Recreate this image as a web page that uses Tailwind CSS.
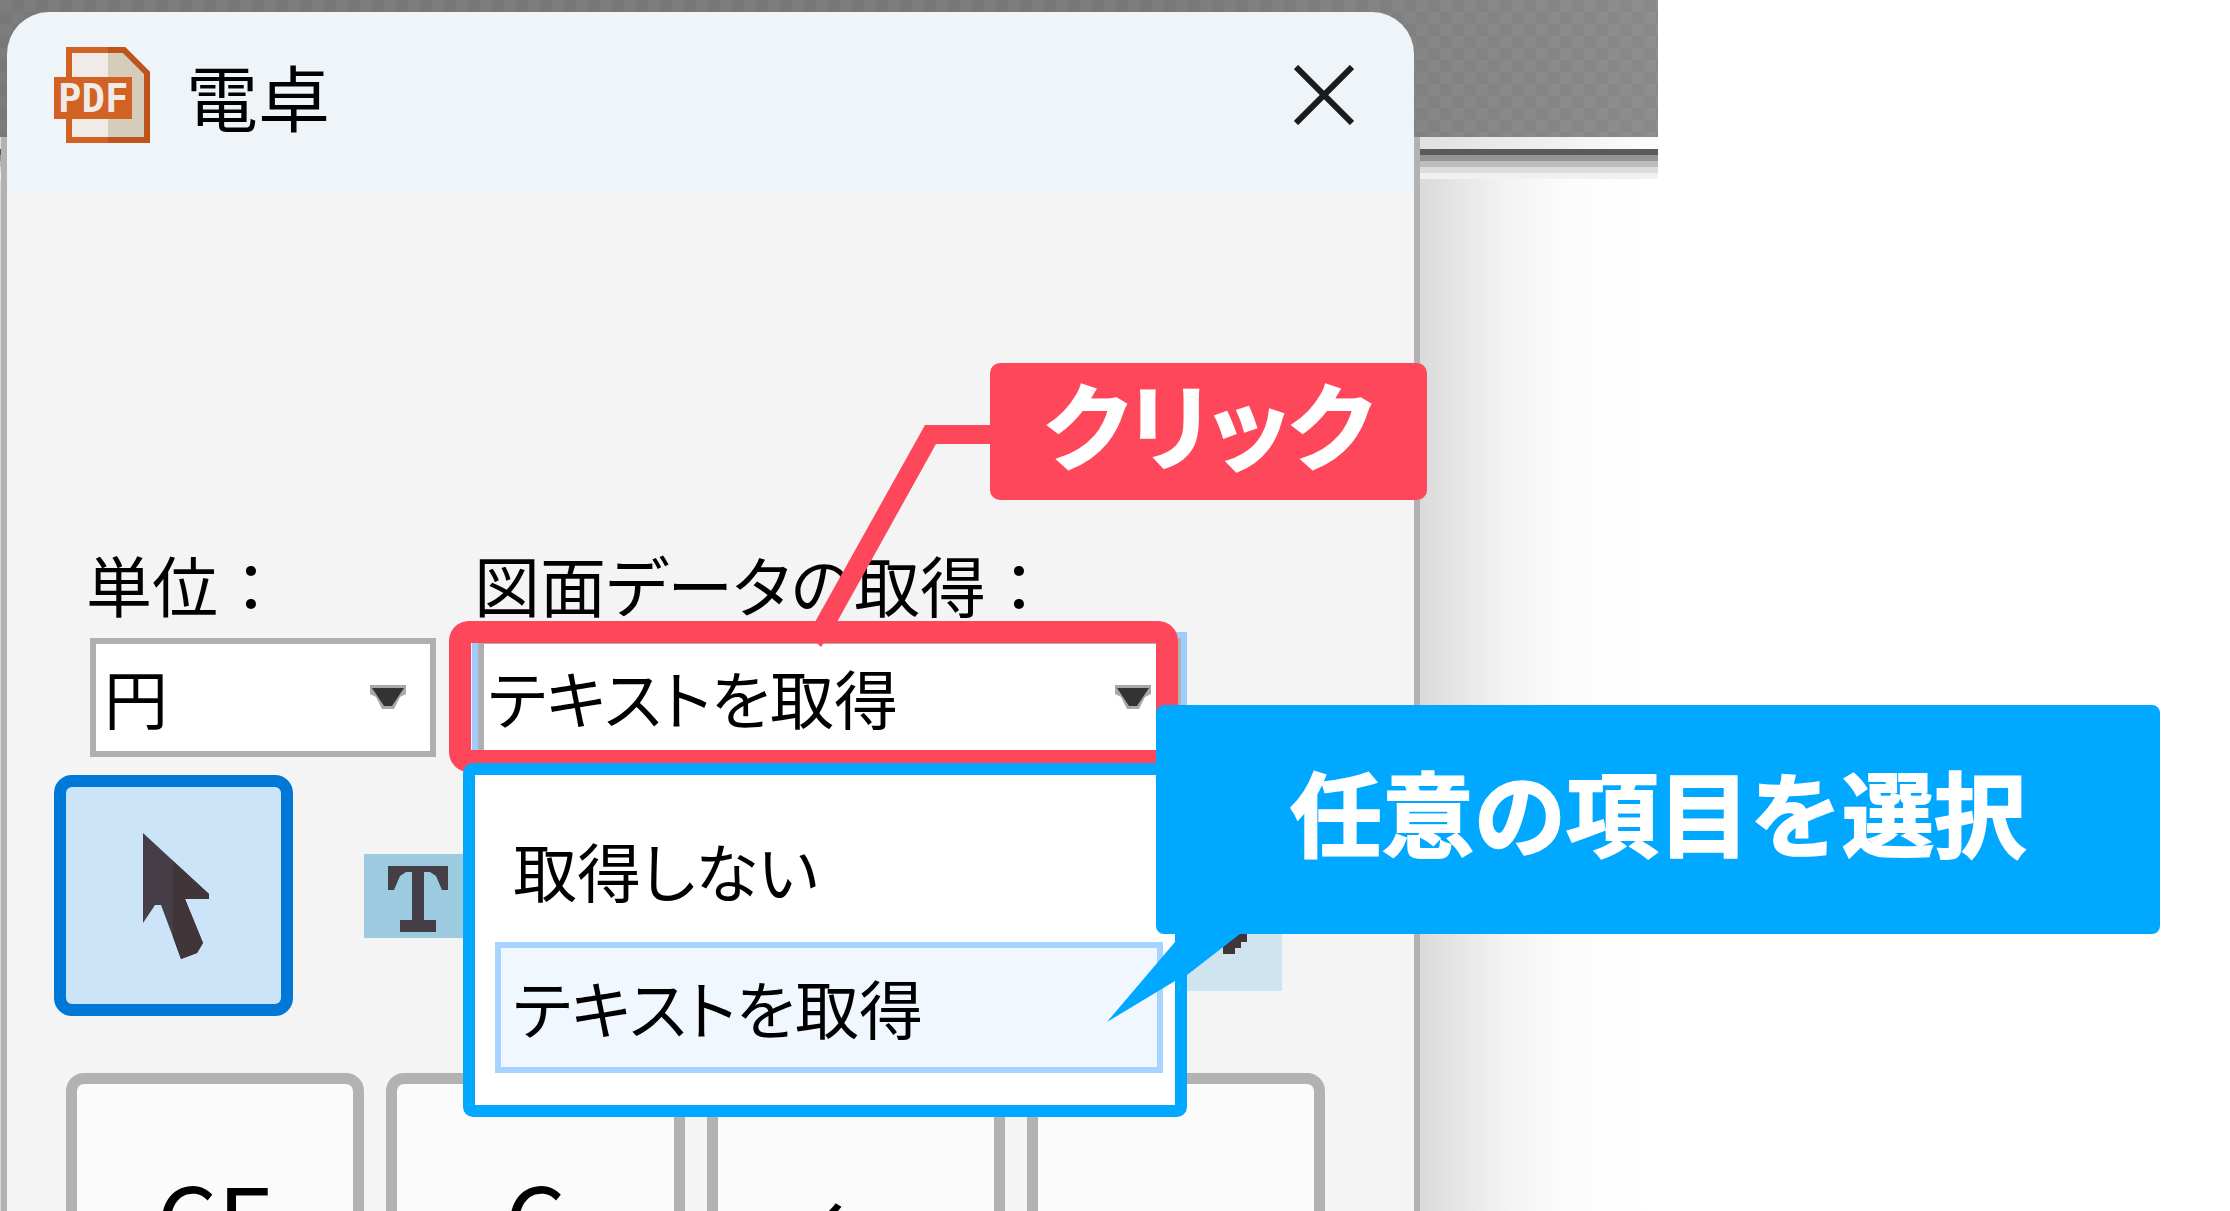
<!DOCTYPE html>
<html lang="ja">
<head>
    <meta charset="UTF-8">
    <meta name="viewport" content="width=device-width, initial-scale=1.0">
    <title>電卓</title>
    <script src="https://cdn.jsdelivr.net/npm/@tailwindcss/browser@4"></script>
</head>
<body class="bg-white font-['Noto_Sans_CJK_JP',sans-serif] text-black">
    <main class="relative h-screen overflow-hidden [font-feature-settings:'palt']">

        <!-- Application behind the dialog -->
        <div class="absolute inset-y-0 left-0 w-full max-w-[1658px] flex flex-col">
            <div class="h-[137px] bg-[linear-gradient(to_right,rgba(0,0,0,0.08)_70%,rgba(255,255,255,0.06)),repeating-conic-gradient(#828282_0_25%,#878787_0_50%)] bg-[length:100%_100%,24px_24px]"></div>
            <div class="h-3 bg-[linear-gradient(to_right,#e0e0e0_1420px,#fdfdfd)]"></div>
            <div class="h-[6px] bg-[#5a5a5a]"></div>
            <div class="h-[6px] bg-[#949494]"></div>
            <div class="h-[6px] bg-[#bdbdbd]"></div>
            <div class="h-[6px] bg-[#dcdcdc]"></div>
            <div class="h-[6px] bg-[#f1f1f1]"></div>
            <div class="grow bg-[linear-gradient(to_right,#dadada_1420px,#e6e6e6_1460px,#f4f4f4_1510px,#fcfcfc_1570px,#ffffff_1650px)]"></div>
        </div>

        <!-- Calculator dialog -->
        <section class="relative mt-3 ml-px w-full max-w-[1419px] px-[6px] bg-[linear-gradient(transparent_125px,#b2b2b2_0)]" aria-label="電卓">
            <header class="h-[179px] rounded-t-[42px] bg-[#eef4f8] flex items-center justify-between pl-[47px] pr-[60px] pb-[13px]">
                <div class="flex items-center gap-9">
                    <svg class="size-24" viewBox="0 0 96 96" aria-hidden="true">
                        <path d="M15 3H70L93 26V93H15Z" fill="#f0ebe6"/>
                        <path d="M54 3H70L93 26V93H54Z" fill="#d5ccb9"/>
                        <path d="M54 3H15V93H54" fill="none" stroke="#d26224" stroke-width="6"/>
                        <path d="M54 3H70L93 26V93H54" fill="none" stroke="#bd541b" stroke-width="6"/>
                        <rect y="30" width="78" height="42" fill="#d26224"/>
                        <text x="4" y="65" font-family="DejaVu Sans Mono" font-weight="bold" font-size="39" fill="#f0ebe6">PDF</text>
                    </svg>
                    <h1 class="text-[72px] leading-none">電卓</h1>
                </div>
                <button type="button" aria-label="閉じる">
                    <svg class="size-[60px]" viewBox="0 0 60 60"><path d="M2 2L58 58M58 2L2 58" stroke="#1a1b1c" stroke-width="6"/></svg>
                </button>
            </header>

            <div class="bg-[#f4f4f4]">
                <form class="flex gap-[42px] pl-[83px] pt-[356px]">
                    <div class="w-[346px]">
                        <label for="unit" class="block -ml-1 mb-[19px] text-[66px] leading-[72px] whitespace-nowrap">単位<span class="[font-feature-settings:normal]">：</span></label>
                        <div class="relative">
                            <select id="unit" class="appearance-none block w-full h-[119px] border-[6px] border-[#afafaf] bg-white pl-2 pb-1 text-[64px] leading-[72px]">
                                <option>円</option>
                            </select>
                            <svg class="absolute right-[30px] top-[47px] w-9 h-6 pointer-events-none" viewBox="0 0 36 24"><path d="M0 0H36V9L30 12L24 24H12L6 12L0 9Z" fill="#a8a8a8"/><path d="M2 3H34L22 21H14Z" fill="#333333"/></svg>
                        </div>
                    </div>
                    <div class="w-[703px]">
                        <label for="source" class="block -ml-1 mb-[19px] text-[66px] leading-[72px] whitespace-nowrap">図面データの取得<span class="[font-feature-settings:normal]">：</span></label>
                        <div class="relative">
                            <select id="source" class="appearance-none block w-full h-[119px] border-[6px] border-[#afafaf] ring-[6px] ring-[#9fcbff] bg-white pl-1 pb-1 text-[64px] leading-[72px]">
                                <option>テキストを取得</option>
                            </select>
                            <svg class="absolute right-[30px] top-[47px] w-9 h-6 pointer-events-none" viewBox="0 0 36 24"><path d="M0 0H36V9L30 12L24 24H12L6 12L0 9Z" fill="#a8a8a8"/><path d="M2 3H34L22 21H14Z" fill="#333333"/></svg>
                        </div>
                    </div>
                </form>

                <div class="flex items-center pt-[18px] pl-[47px] pr-[132px]">
                    <button type="button" aria-label="選択" class="w-[239px] h-[241px] rounded-[18px] border-[12px] border-[#0078d7] bg-[#cce4f7]">
                        <svg class="w-[72px] h-[126px] ml-[77px]" viewBox="0 0 72 126">
                            <path d="M0 0L66 61V66H42L60 110L54 120L38 126L30 104L18 72H12L0 90Z" fill="#463e46"/>
                            <path d="M30 28L66 61V66H42L60 110L54 120L38 126L30 104Z" fill="#403538"/>
                        </svg>
                    </button>
                    <button type="button" aria-label="テキスト" class="ml-[71px]">
                        <svg class="w-[108px] h-[84px]" viewBox="0 0 108 84">
                            <rect width="108" height="84" fill="#9ccadf"/>
                            <path d="M24 12H84V36H78L72 22L66 18H60V66H72V78H36V66H48V18H42L36 22L30 36H24Z" fill="#463e46"/>
                        </svg>
                    </button>
                    <button type="button" aria-label="範囲" class="ml-auto">
                        <svg class="w-[140px] h-[190px]" viewBox="0 0 140 190">
                            <rect width="140" height="190" fill="#cfe4ee"/>
                            <path d="M70 130H105V141H99V147H93V153H81V141ZM44 158H57V165H44Z" fill="#403538"/>
                        </svg>
                    </button>
                </div>

                <div class="grid grid-cols-4 gap-[22px] pt-[57px] pl-[59px] pr-[89px]">
                    <button type="button" class="h-[240px] rounded-[18px] border-[11px] border-[#b2b2b2] bg-[#fbfbfb] pt-12 text-[96px] leading-none">CE</button>
                    <button type="button" class="h-[240px] rounded-[18px] border-[11px] border-[#b2b2b2] bg-[#fbfbfb] pt-12 text-[96px] leading-none">C</button>
                    <button type="button" class="h-[240px] rounded-[18px] border-[11px] border-[#b2b2b2] bg-[#fbfbfb] pt-14 text-[96px] leading-none">←</button>
                    <button type="button" class="h-[240px] rounded-[18px] border-[11px] border-[#b2b2b2] bg-[#fbfbfb]" aria-label="÷"></button>
                </div>
            </div>
        </section>

        <!-- Click callout -->
        <div class="absolute left-[449px] top-[621px] w-[729px] h-[151px] rounded-[20px] border-[22px] border-[#ff475b]"></div>
        <svg class="absolute left-[815px] top-[425px] w-[176px] h-[223px]" viewBox="0 0 176 223"><path d="M110 0H176V19H121L22 197L6 222L0 216V197Z" fill="#ff475b"/></svg>
        <div class="absolute left-[990px] top-[363px] w-[437px] h-[137px] rounded-[10px] bg-[#ff475b] flex items-center justify-center pb-5 text-white text-[94px] leading-none font-bold [-webkit-text-stroke:2px_white]">クリック</div>

        <!-- Opened list -->
        <ul role="listbox" aria-label="図面データの取得" class="absolute left-[463px] top-[763px] w-[724px] rounded-[10px] border-[12px] border-[#00a8ff] bg-white pl-5 pr-3 pt-[30px] pb-8 flex flex-col gap-[6px] text-[64px] leading-[72px]">
            <li role="option" class="h-[131px] border-[6px] border-transparent pl-3 pb-1 flex items-center">取得しない</li>
            <li role="option" aria-selected="true" class="h-[131px] border-[6px] border-[#a6d3ff] bg-[#f0f7ff] pl-3 pb-1 flex items-center">テキストを取得</li>
        </ul>

        <!-- Select callout -->
        <svg class="absolute left-[1107px] top-[925px] w-[140px] h-[156px]" viewBox="0 0 140 156"><path d="M68 0H140L133 9L80 50V156H68V56L0 97L68 17Z" fill="#00a8ff"/></svg>
        <div class="absolute left-[1156px] top-[705px] w-[1004px] h-[229px] rounded-[8px] bg-[#00a8ff] flex items-center justify-center pb-5 text-white text-[92px] leading-none font-bold [font-feature-settings:normal] [-webkit-text-stroke:2px_white]">任意の項目を選択</div>
    </main>
</body>
</html>
